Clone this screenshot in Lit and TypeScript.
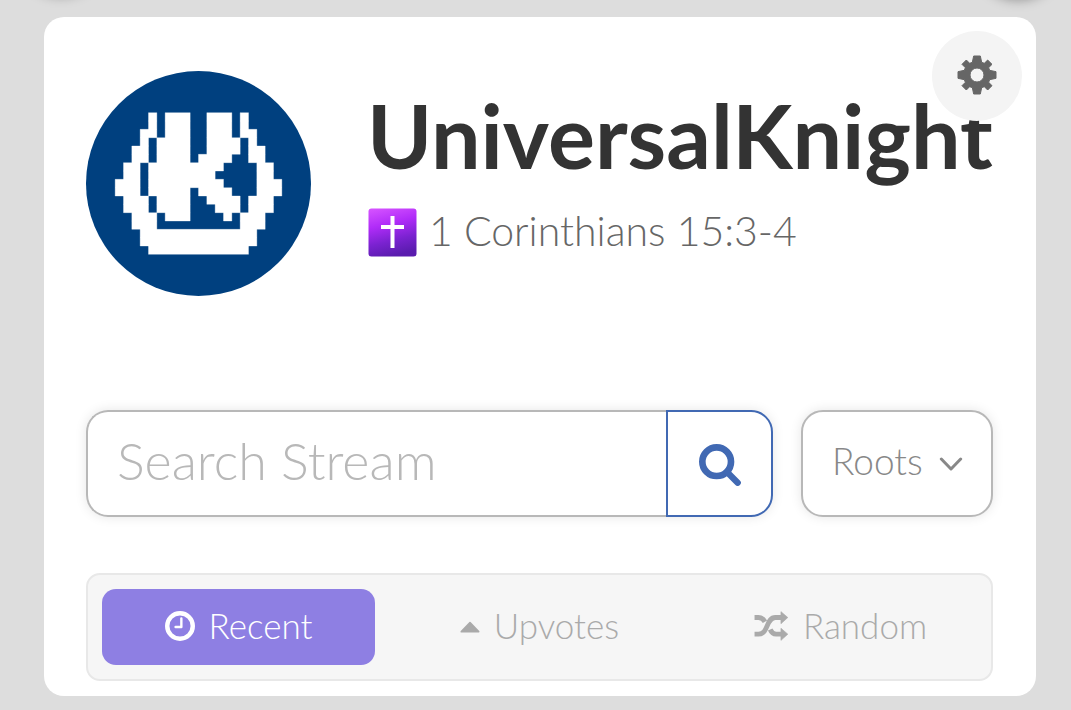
import { LitElement, html, css, svg } from "lit";
import { customElement, state } from "lit/decorators.js";

type Span = [number, number];

// Filled cell runs (first column, last column) of the avatar's pixel emblem, row by row.
const EMBLEM: Span[][] = [
  [[4, 4], [6, 8], [11, 13], [15, 15]],
  [[4, 4], [6, 8], [11, 13], [15, 15]],
  [[3, 4], [6, 8], [11, 13], [15, 16]],
  [[3, 3], [5, 8], [11, 14], [16, 16]],
  [[2, 3], [5, 8], [11, 14], [16, 17]],
  [[2, 3], [5, 8], [10, 13], [16, 17]],
  [[1, 2], [4, 12], [17, 18]],
  [[1, 2], [4, 11], [17, 18]],
  [[0, 2], [4, 12], [17, 19]],
  [[0, 2], [4, 8], [10, 13], [17, 19]],
  [[1, 3], [5, 8], [11, 14], [16, 18]],
  [[1, 3], [5, 8], [12, 14], [16, 18]],
  [[2, 4], [6, 8], [13, 13], [15, 17]],
  [[2, 4], [15, 17]],
  [[3, 16]],
  [[3, 16]],
  [[4, 15]],
];

const emblemPath = EMBLEM.map((row, y) =>
  row.map(([a, b]) => `M${a} ${y}h${b - a + 1}v1h${a - b - 1}z`).join("")
).join("");

const clockIcon = svg`<svg class="icon clock" viewBox="0 0 88 88" aria-hidden="true">
  <circle cx="44" cy="44" r="37.500" fill="none" stroke="currentColor" stroke-width="13"/>
  <path d="M48 22V47H31" fill="none" stroke="currentColor" stroke-width="7" stroke-linecap="round" stroke-linejoin="round"/>
</svg>`;

const caretIcon = svg`<svg class="icon caret" viewBox="0 0 60 88" aria-hidden="true">
  <path d="M30 34L56 61H4Z" fill="currentColor" stroke="currentColor" stroke-width="5" stroke-linejoin="round"/>
</svg>`;

const shuffleIcon = svg`<svg class="icon shuffle" viewBox="0 0 104 92" aria-hidden="true">
  <g fill="none" stroke="currentColor" stroke-width="15">
    <path d="M0 71H12C44 71 34 20 64 20H82"/>
    <path d="M0 20H12Q25 20 32 33"/>
    <path d="M48 57Q54 71 66 71H82"/>
  </g>
  <path d="M81 2L102 20L81 39ZM81 53L102 71L81 90Z" fill="currentColor" stroke="currentColor" stroke-width="2" stroke-linejoin="round"/>
</svg>`;

@customElement("app-root")
export class AppRoot extends LitElement {
  @state() private sort = "recent";

  static styles = css`
    :host {
      display: block;
      position: relative;
      box-sizing: border-box;
      min-height: 100vh;
      padding: 17px 35px 14px 44px;
      overflow: hidden;
      background: #ddd;
      color: #333;
      font-family: Lato, "Open Sans", sans-serif;
      font-weight: 300;
    }
    *, *::before, *::after { box-sizing: border-box; }
    button, input, select { font: inherit; margin: 0; }
    svg { display: block; flex: none; }

    .float {
      position: absolute;
      top: -90px;
      width: 88px;
      height: 88px;
      border-radius: 50%;
      box-shadow: 0 2px 12px rgba(0, 0, 0, 0.35);
    }
    .float.left { left: 17px; top: -94px; }
    .float.right { right: 9px; }

    .card {
      position: relative;
      padding: 54px 43px 15px 42px;
      border-radius: 20px;
      background: #fff;
    }
    .profile {
      display: flex;
      gap: 56px;
      margin-bottom: 114px;
    }
    .avatar { width: 225px; height: 225px; }
    .who { padding-top: 14px; min-width: 0; }
    h1 {
      margin: 0;
      font-size: 88px;
      line-height: 100px;
      font-weight: 700;
      white-space: nowrap;
    }
    .verse {
      display: flex;
      align-items: center;
      gap: 12px;
      margin: 21px 0 0 1px;
      color: #666;
      font-size: 41px;
      line-height: 50px;
      white-space: nowrap;
    }
    .verse span { padding-bottom: 3px; }
    .cross { width: 49px; height: 49px; }

    .settings {
      position: absolute;
      top: 14px;
      right: 14px;
      display: grid;
      place-items: center;
      width: 90px;
      height: 90px;
      padding: 0 0 3px;
      border: 0;
      border-radius: 50%;
      background: #f4f4f4;
      color: #666;
    }
    .gear { width: 40px; height: 40px; }

    .filters {
      display: flex;
      gap: 28px;
      height: 107px;
      margin-bottom: 56px;
    }
    .search {
      flex: 1;
      display: flex;
      min-width: 0;
      border-radius: 22px;
      box-shadow: 0 0 12px rgba(0, 0, 0, 0.1);
    }
    .query {
      flex: 1;
      min-width: 0;
      padding: 0 29px 8px;
      border: 2px solid #b8b8b8;
      border-right: 0;
      border-radius: 22px 0 0 22px;
      background: #fff;
      color: #333;
      font-size: 52px;
      outline: 0;
    }
    .query::placeholder { color: #b8b8b8; opacity: 1; }
    .go {
      display: grid;
      place-items: center;
      width: 107px;
      padding: 2px 0 0;
      border: 2px solid #4169b3;
      border-radius: 0 22px 22px 0;
      background: #fff;
      color: #4169b3;
    }
    .lens { width: 42px; height: 42px; }
    .kind {
      display: grid;
      align-items: center;
      width: 192px;
    }
    .kind select {
      grid-area: 1 / 1;
      width: 100%;
      height: 100%;
      padding: 0 60px 6px 29px;
      appearance: none;
      border: 2px solid #b8b8b8;
      border-radius: 22px;
      background: #fff;
      box-shadow: 0 0 12px rgba(0, 0, 0, 0.1);
      color: #888;
      font-size: 37px;
    }
    .chevron {
      grid-area: 1 / 1;
      justify-self: end;
      width: 24px;
      height: 14px;
      margin-right: 30px;
      color: #888;
      pointer-events: none;
    }

    .tabs {
      display: grid;
      grid-template-columns: repeat(3, 1fr);
      gap: 28px;
      padding: 14px;
      border: 2px solid #e8e8e8;
      border-radius: 14px;
      background: #f6f6f6;
    }
    .tab {
      display: flex;
      align-items: center;
      justify-content: center;
      gap: 14px;
      height: 76px;
      padding: 0 0 2px;
      border: 0;
      border-radius: 14px;
      background: none;
      color: #aaa;
      font-size: 35px;
    }
    .tab span { padding-bottom: 2px; }
    .tab.on { background: #8e7fe3; color: #fff; }
    .icon { height: 30px; }
    .clock { width: 30px; }
    .caret { width: 20px; }
    .shuffle { width: 35px; }
  `;

  private tab(id: string, label: string, icon: unknown) {
    const on = this.sort === id;
    return html`<button class="tab ${on ? "on" : ""}" aria-pressed=${on} @click=${() => (this.sort = id)}>
      ${icon}<span>${label}</span>
    </button>`;
  }

  render() {
    return html`
      <div class="float left"></div>
      <div class="float right"></div>
      <main class="card">
        <header class="profile">
          <svg class="avatar" viewBox="0 0 27 27" role="img" aria-label="Avatar">
            <circle cx="13.500" cy="13.500" r="13.500" fill="#00407f"/>
            <path transform="translate(3.500 5)" fill="#fff" stroke="#fff" stroke-width="0.040" d=${emblemPath}/>
          </svg>
          <div class="who">
            <h1>UniversalKnight</h1>
            <p class="verse">
              <svg class="cross" viewBox="0 0 49 49" role="img" aria-label="Cross">
                <defs>
                  <linearGradient id="violet" x1="0.200" y1="0" x2="0.450" y2="1">
                    <stop offset="0" stop-color="#d350ff"/>
                    <stop offset="0.350" stop-color="#b02cf8"/>
                    <stop offset="0.700" stop-color="#7a22d0"/>
                    <stop offset="1" stop-color="#5a1cae"/>
                  </linearGradient>
                </defs>
                <rect x="0.500" y="0.500" width="48" height="48" rx="3" fill="url(#violet)"/>
                <path d="M24.500 8V40M13 19H36" stroke="#fff" stroke-width="4" fill="none"/>
              </svg>
              <span>1 Corinthians 15:3-4</span>
            </p>
          </div>
        </header>

        <form class="filters" @submit=${(e: Event) => e.preventDefault()}>
          <div class="search">
            <input class="query" type="text" placeholder="Search Stream" aria-label="Search Stream">
            <button class="go" type="submit" aria-label="Search">
              <svg class="lens" viewBox="0 0 126 126" fill="none" stroke="currentColor" aria-hidden="true">
                <circle cx="53" cy="53" r="43" stroke-width="20"/>
                <path d="M84 84L116 116" stroke-width="19" stroke-linecap="round"/>
              </svg>
            </button>
          </div>
          <div class="kind">
            <select aria-label="Post kind">
              <option>Roots</option>
              <option>Replies</option>
            </select>
            <svg class="chevron" viewBox="0 0 72 42" fill="none" stroke="currentColor" aria-hidden="true">
              <path d="M7 6L36 36L65 6" stroke-width="9" stroke-linecap="round" stroke-linejoin="round"/>
            </svg>
          </div>
        </form>

        <div class="tabs" role="group" aria-label="Sort order">
          ${this.tab("recent", "Recent", clockIcon)}
          ${this.tab("upvotes", "Upvotes", caretIcon)}
          ${this.tab("random", "Random", shuffleIcon)}
        </div>

        <button class="settings" aria-label="Settings">
          <svg class="gear" viewBox="-60 -60 120 120" aria-hidden="true">
            <path fill="currentColor" stroke="currentColor" stroke-width="3" stroke-linejoin="round" fill-rule="evenodd"
              d="M-10 -57L10 -57L14 -38L22 -35L32 -45L45 -32L35 -22L38 -14L57 -10L57 10L38 14L35 22L45 32L32 45L22 35L14 38L10 57L-10 57L-14 38L-22 35L-32 45L-45 32L-35 22L-38 14L-57 10L-57 -10L-38 -14L-35 -22L-45 -32L-32 -45L-22 -35L-14 -38ZM21 0A21 21 0 1 0 -21 0A21 21 0 1 0 21 0Z"/>
          </svg>
        </button>
      </main>
    `;
  }
}
